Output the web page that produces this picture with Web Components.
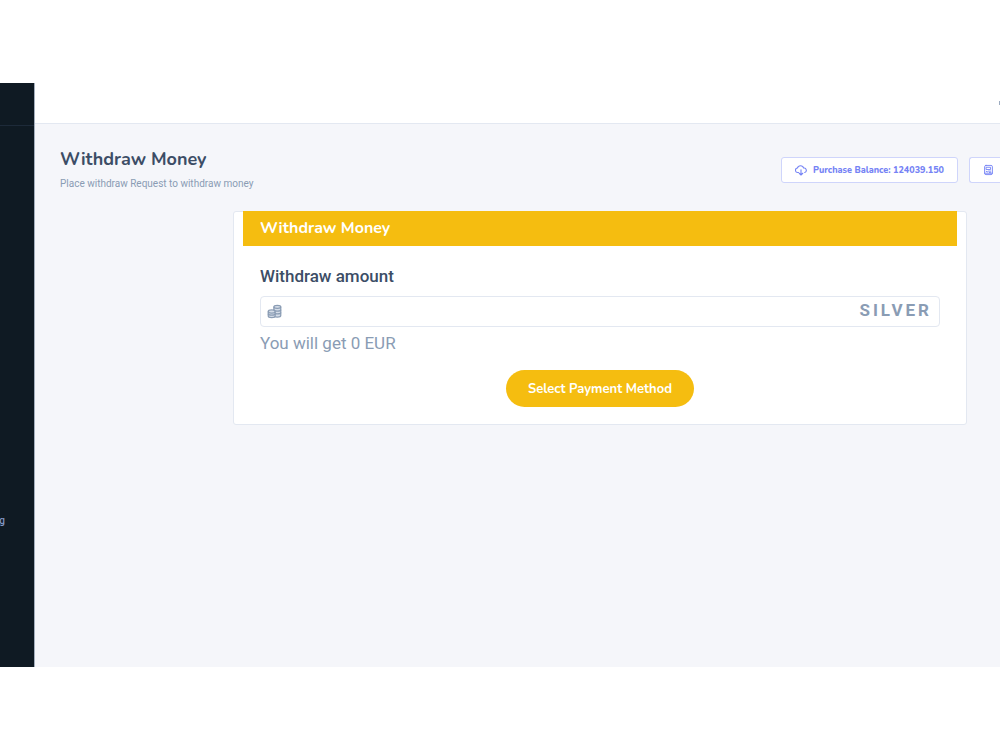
<!DOCTYPE html>
<html lang="en">
<head>
<meta charset="utf-8">
<meta name="viewport" content="width=device-width, initial-scale=1">
<title>Withdraw Money</title>
<style>
  :root {
    --brand: #f5bd10;
    --ink: #3c4d66;
    --muted: #8a9cb4;
    --accent: #7583f5;
    --line: #e3e8f1;
    --head: Nunito, Lato, sans-serif;
  }
  body { margin: 0; background: #fff; font-family: Roboto, sans-serif; color: var(--ink); }
</style>
</head>
<body>
<app-shell>
  <side-nav slot="nav"></side-nav>
  <top-bar slot="top"></top-bar>
  <page-head>
    <span slot="title">Withdraw Money</span>
    <span slot="sub">Place withdraw Request to withdraw money</span>
    <balance-button slot="actions">
      <svg slot="icon" width="12" height="12" viewBox="0 0 24 24" fill="none" stroke="currentColor" stroke-width="2.2" stroke-linecap="round" stroke-linejoin="round"><path d="M7 17H5.500a4.500 4.500 0 0 1-.7-8.950A6.500 6.500 0 0 1 17.300 8.100 4.600 4.600 0 0 1 19.500 17M12 11.500V22M8.500 18.500 12 22l3.500-3.500"/></svg>
      Purchase Balance: 124039.150
    </balance-button>
    <balance-button slot="actions" cut aria-label="Balance report">
      <svg slot="icon" width="12" height="12" viewBox="0 0 24 24" fill="none" stroke="currentColor" stroke-width="2" stroke-linecap="round" stroke-linejoin="round"><rect x="3.500" y="2" width="17" height="20" rx="3"/><path d="M7.500 6h9v5h-9zM7 15l3 1M12 14.500h5M14 17.500l3 .5M3.500 19h17"/></svg>
    </balance-button>
  </page-head>
  <withdraw-card></withdraw-card>
</app-shell>

<script>
const define = (name, html, setup) => customElements.define(name, class extends HTMLElement {
  constructor() {
    super();
    const template = document.createElement('template');
    template.innerHTML = html;
    this.attachShadow({ mode: 'open' }).append(template.content.cloneNode(true));
  }
  connectedCallback() { if (setup) setup(this); }
});

define('app-shell', `
  <style>
    :host { display: block; padding: 83px 0; }
    .frame { display: grid; grid-template-columns: 35px minmax(0, 1fr); min-height: calc(100vh - 166px); background: #f5f6fa; }
    ::slotted([slot=nav]) { height: 100%; }
  </style>
  <div class="frame"><slot name="nav"></slot><div><slot name="top"></slot><main><slot></slot></main></div></div>`);

define('side-nav', `
  <style>
    :host { display: flex; flex-direction: column; box-sizing: border-box; background: #0f1a23; border-right: 1px solid #a4afbd; }
    .brand { height: 42px; border-bottom: 1px solid #1d2a39; }
    nav { padding-top: 387px; }
    a { display: block; width: 5px; font: 500 10px/16px Roboto, sans-serif; color: #8297c4; text-decoration: none; direction: rtl; overflow: hidden; }
  </style>
  <div class="brand"></div><nav><a href="#">g</a></nav>`);

define('top-bar', `
  <style>
    :host { display: flex; justify-content: flex-end; align-items: center; box-sizing: border-box; height: 41px; background: #fff; border-bottom: 1px solid var(--line); }
    i { width: 1px; height: 4px; background: #9cabc0; }
  </style><i></i>`);

define('page-head', `
  <style>
    :host { display: flex; justify-content: space-between; padding: 22px 0 0 25px; }
    h1 { margin: 0; font: 700 18px/26px var(--head); }
    p { margin: 4px 0 0; font-size: 10px; line-height: 16px; color: var(--muted); }
    .actions { display: flex; gap: 11px; padding-top: 11px; }
  </style>
  <div><h1><slot name="title"></slot></h1><p><slot name="sub"></slot></p></div>
  <div class="actions"><slot name="actions"></slot></div>`);

define('balance-button', `
  <style>
    :host { display: block; }
    button { display: flex; align-items: center; gap: 6px; box-sizing: border-box; height: 26px; padding: 0 13px; background: #fff; border: 1px solid #cfd5fb; border-radius: 3px; color: var(--accent); font: 800 9px/16px var(--head); white-space: nowrap; }
    :host([cut]) button { width: 31px; padding-right: 0; border-right: 0; border-radius: 3px 0 0 3px; }
  </style>
  <button type="button"><slot name="icon"></slot><span><slot></slot></span></button>`,
  host => {
    const label = host.getAttribute('aria-label');
    if (label) host.shadowRoot.querySelector('button').setAttribute('aria-label', label);
  });

define('withdraw-card', `
  <style>
    :host { display: block; margin: 19px 33px 0 198px; background: #fff; border: 1px solid var(--line); border-radius: 3px; }
    h2 { margin: -1px 9px 0; padding: 0 17px; background: var(--brand); color: #fff; font: 700 16px/35px var(--head); }
    form { padding: 18px 26px 17px; }
    label { display: block; font-weight: 500; font-size: 17px; line-height: 25px; }
    .field { display: flex; align-items: center; box-sizing: border-box; height: 31px; margin-top: 7px; padding: 0 7px 0 6px; border: 1px solid var(--line); border-radius: 4px; color: var(--muted); }
    input { flex: 1; min-width: 0; height: 29px; padding: 0 8px; border: 0; outline: 0; background: none; font: 17px Roboto, sans-serif; color: var(--ink); }
    .unit { font-weight: 700; font-size: 17px; line-height: 29px; height: 31px; letter-spacing: 3px; }
    p { margin: 4px 0 0; font-size: 17px; line-height: 25px; color: var(--muted); }
    button { display: block; height: 37px; margin: 14px auto 0; padding: 0 22px; border: 0; border-radius: 19px; background: var(--brand); color: #fff; font: 700 13px/16px var(--head); }
  </style>
  <h2>Withdraw Money</h2>
  <form>
    <label for="amount">Withdraw amount</label>
    <div class="field">
      <svg width="15" height="15" viewBox="0 0 24 24" fill="#d5dde8" stroke="currentColor" stroke-width="2"><path d="M11 4.500v14c0 3.500 11 3.500 11 0v-14"/><ellipse cx="16.500" cy="4.500" rx="5.500" ry="2.500"/><path d="M11 9c0 3 11 3 11 0M11 13.500c0 3 11 3 11 0" fill="none"/><path d="M2 12v7c0 3.500 11 3.500 11 0v-7"/><ellipse cx="7.500" cy="12" rx="5.500" ry="2.500"/><path d="M2 15.500c0 3 11 3 11 0" fill="none"/></svg>
      <input id="amount" type="text" inputmode="decimal"><span class="unit">SILVER</span>
    </div>
    <p>You will get 0 EUR</p>
    <button type="button">Select Payment Method</button>
  </form>`);
</script>
</body>
</html>
